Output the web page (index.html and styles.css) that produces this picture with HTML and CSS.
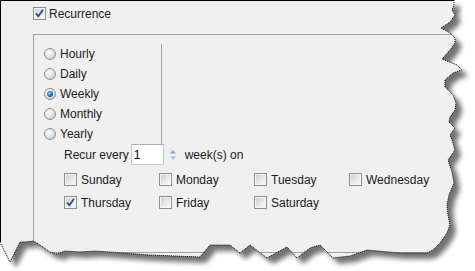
FILE: index.html
```html
<!DOCTYPE html>
<html>
<head>
  <meta charset="UTF-8">
  <title>Recurrence</title>
  <link rel="stylesheet" href="styles.css">
</head>
<body>
<div class="sheet">
  <svg class="paper" width="475" height="271" viewBox="0 0 475 271">
    <defs>
      <clipPath id="tear" clipPathUnits="userSpaceOnUse">
        <path id="tearShape" d="M0 0 L454 0 L454 5 L452 10 L455 15 L450 22 L441 28 L450 33 L455 38 L455 43 L450 50 L442 59 L457 65 L462 70 L453 73 L445 80 L445 87 L453 95 L456 103 L455 110 L450 117 L449 122 L455 128 L450 135 L452 140 L455 150 L448 160 L452 172 L454 183 L449 195 L447 205 L448 215 L450 225 L447 233 L440 243 L433 250 L427 253 L400 253 L367 250 L350 256 L333 258 L320 245 L310 248 L297 258 L287 247 L267 258 L250 245 L240 253 L230 245 L210 245 L200 257 L150 255 L110 252 L95 251 L80 252 L65 251 L57 254 L50 252 L37 243 L33 241 L25 242 L20 242 L10 262 L0 242 Z"/>
      </clipPath>
      <filter id="soft" x="-10%" y="-10%" width="130%" height="130%">
        <feGaussianBlur stdDeviation="2.5"/>
      </filter>
    </defs>
    <use href="#tearShape" class="shadow" transform="translate(6 6)" filter="url(#soft)"/>
    <use href="#tearShape" class="fill"/>
  </svg>

  <div class="panel">
    <div class="head">
      <span class="cb on"><svg width="11" height="11" viewBox="0 0 11 11"><path d="M2 5.5 L4.3 8.2 L9 1.8" /></svg></span>
      <span>Recurrence</span>
    </div>

    <div class="group">
      <div class="freq">
        <label class="opt"><span class="rb"></span>Hourly</label>
        <label class="opt"><span class="rb"></span>Daily</label>
        <label class="opt"><span class="rb on"></span>Weekly</label>
        <label class="opt"><span class="rb"></span>Monthly</label>
        <label class="opt"><span class="rb"></span>Yearly</label>
      </div>

      <div class="recur">
        <span>Recur every</span>
        <span class="num">1</span>
        <svg class="spin" width="8" height="16" viewBox="0 0 8 16">
          <path d="M4 3 L7 6.5 L1 6.5 Z" fill="#7fa6cf"/>
          <path d="M1 9.5 L7 9.5 L4 13 Z" fill="#a9c4e0"/>
        </svg>
        <span class="unit">week(s) on</span>
      </div>

      <div class="days">
        <label class="opt"><span class="cb"></span>Sunday</label>
        <label class="opt"><span class="cb"></span>Monday</label>
        <label class="opt"><span class="cb"></span>Tuesday</label>
        <label class="opt"><span class="cb"></span>Wednesday</label>
        <label class="opt"><span class="cb on"><svg width="11" height="11" viewBox="0 0 11 11"><path d="M2 5.5 L4.3 8.2 L9 1.8" /></svg></span>Thursday</label>
        <label class="opt"><span class="cb"></span>Friday</label>
        <label class="opt"><span class="cb"></span>Saturday</label>
      </div>
    </div>
  </div>

  <svg class="edge" width="475" height="271" viewBox="0 0 475 271">
    <path class="solid" d="M0.5 242 L0.5 0.5 L454 0.5"/>
    <path class="dots" d="M454 0 L454 5 L452 10 L455 15 L450 22 L441 28 L450 33 L455 38 L455 43 L450 50 L442 59 L457 65 L462 70 L453 73 L445 80 L445 87 L453 95 L456 103 L455 110 L450 117 L449 122 L455 128 L450 135 L452 140 L455 150 L448 160 L452 172 L454 183 L449 195 L447 205 L448 215 L450 225 L447 233 L440 243 L433 250 L427 253 L400 253 L367 250 L350 256 L333 258 L320 245 L310 248 L297 258 L287 247 L267 258 L250 245 L240 253 L230 245 L210 245 L200 257 L150 255 L110 252 L95 251 L80 252 L65 251 L57 254 L50 252 L37 243 L33 241 L25 242 L20 242 L10 262 L0 242"/>
  </svg>
</div>
</body>
</html>
```

FILE: styles.css
```css
body {
  margin: 0;
  background-color: #ffffff;
  font-family: "Liberation Sans", Arial, sans-serif;
  font-size: 12px;
  color: #1b1b1b;
}

.sheet {
  position: relative;
  width: 475px;
  height: 271px;
  overflow: hidden;
}

.paper,
.edge {
  position: absolute;
  left: 0;
  top: 0;
}

.edge {
  pointer-events: none;
}

.shadow {
  fill: #5a5a5a;
  opacity: 0.85;
}

.fill {
  fill: #f0f0f0;
}

.solid {
  fill: none;
  stroke: #000;
  stroke-width: 1;
}

.dots {
  fill: none;
  stroke: #000;
  stroke-width: 1;
  stroke-dasharray: 1 1;
}

.panel {
  position: relative;
  width: 475px;
  height: 271px;
  clip-path: url(#tear);
}

.head {
  display: flex;
  align-items: center;
  gap: 3px;
  height: 13px;
  padding: 7px 0 0 33px;
}

.group {
  box-sizing: border-box;
  margin: 14px 0 0 33px;
  height: 219px;
  padding-top: 9px;
  border: 1px solid #a0a0a0;
  border-right: none;
}

.freq {
  box-sizing: border-box;
  width: 128px;
  height: 100px;
  padding-left: 10px;
  border-right: 1px solid #a0a0a0;
}

.opt {
  display: flex;
  align-items: center;
  gap: 4px;
  height: 20px;
}

/* windows 7 style radio */
.rb {
  box-sizing: border-box;
  width: 12px;
  height: 12px;
  border-radius: 50%;
  border: 1px solid #8c8f94;
  background: radial-gradient(circle at 35% 35%, #ffffff 0%, #e6e6e6 45%, #c4c6ca 100%);
  display: flex;
  align-items: center;
  justify-content: center;
}

.rb.on::after {
  content: "";
  width: 6px;
  height: 6px;
  border-radius: 50%;
  background: radial-gradient(circle at 40% 40%, #8fd0f5 0%, #2a7cc4 45%, #0b2f5e 100%);
}

/* windows 7 style checkbox */
.cb {
  box-sizing: border-box;
  width: 13px;
  height: 13px;
  border: 1px solid #8e8f8f;
  background: linear-gradient(135deg, #c7cbd1 0%, #e8e9eb 55%, #fbfbfb 100%);
  box-shadow: inset 0 0 0 1px #f5f5f5;
  display: flex;
  align-items: center;
  justify-content: center;
  flex-shrink: 0;
}

.cb svg path {
  fill: none;
  stroke: #34488a;
  stroke-width: 1.8;
}

.recur {
  display: flex;
  align-items: center;
  height: 21px;
  margin-left: 30px;
}

.num {
  box-sizing: border-box;
  width: 33px;
  height: 21px;
  margin-left: 2px;
  padding: 3px 0 0 2px;
  background-color: #fff;
  border: 1px solid #c5c8cd;
  border-top-color: #abadb3;
  color: #000;
}

.spin {
  margin-left: 5px;
}

.unit {
  margin-left: 8px;
}

.days {
  display: grid;
  grid-template-columns: repeat(4, 95px);
  grid-auto-rows: 23px;
  margin: 3px 0 0 30px;
}

.days .opt {
  height: 23px;
}
```
